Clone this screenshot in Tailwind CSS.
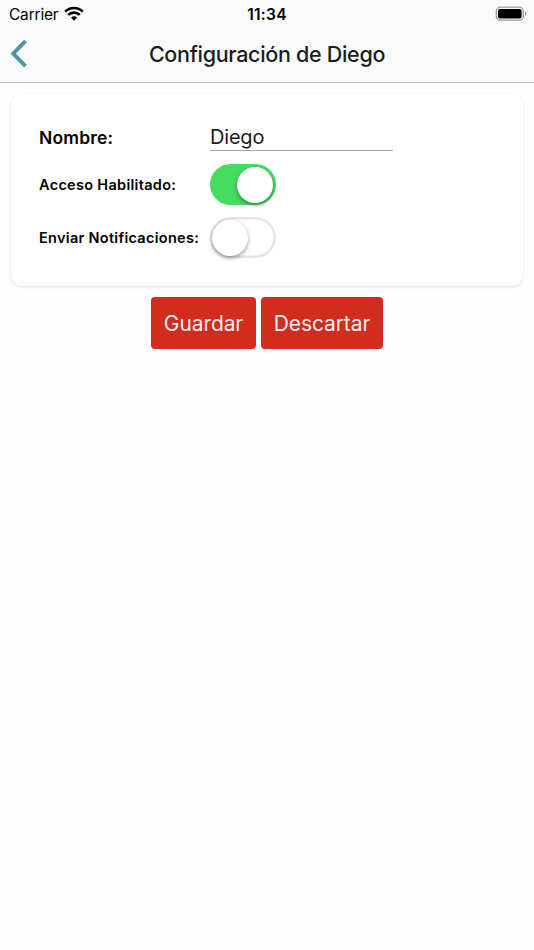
<!DOCTYPE html>
<html lang="es">
<head>
    <meta charset="UTF-8">
    <meta name="viewport" content="width=device-width, initial-scale=1.0">
    <title>Configuración de Diego</title>
    <script src="https://cdn.jsdelivr.net/npm/@tailwindcss/browser@4"></script>
</head>
<body class="bg-[#fefefe] min-h-screen overflow-hidden font-['Inter','Liberation_Sans',sans-serif] text-black">
    <header class="h-[83px] bg-[#fafafa] border-b border-[#b9b9b9]">
        <!-- Status bar -->
        <div class="grid grid-cols-3 items-center h-[27px] px-[9px] text-[15.5px] leading-[28px]">
            <div class="flex items-center gap-[6px]">
                <span class="pt-px tracking-[-0.2px]">Carrier</span>
                <svg class="w-5 h-[15px] -mt-[2px]" viewBox="0 0 20 15" fill="none" stroke="#000" stroke-width="2.7">
                    <path d="M1.2 5.6a12.6 12.6 0 0 1 17.6 0" />
                    <path d="M4.2 8.9a8.3 8.3 0 0 1 11.6 0" />
                    <path d="M7 11.6a4.3 4.3 0 0 1 6 0L10 14.7z" fill="#000" stroke="none" />
                </svg>
            </div>
            <div class="pt-px text-center font-semibold tracking-[0.3px]">11:34</div>
            <svg class="justify-self-end w-8 h-4 -mr-[2px] -mt-px" viewBox="0 0 32 16">
                <rect x="1.3" y="1.2" width="27" height="13" rx="4" fill="none" stroke="#999" stroke-width="1.3" />
                <rect x="3" y="3" width="23.6" height="9.6" rx="2" />
                <path d="M30 5.6q1.6.6 1.6 2.2T30 10z" fill="#999" />
            </svg>
        </div>
        <!-- Navigation bar -->
        <div class="grid grid-cols-[40px_1fr_40px] items-center h-[55px]">
            <a href="#" aria-label="Volver">
                <svg class="w-10 h-8 -mt-px" viewBox="0 0 40 32" fill="none" stroke="#4797a1" stroke-width="3.8">
                    <path d="M25.5 3.1L13.2 15.6L25.5 28.1" />
                </svg>
            </a>
            <h1 class="text-center text-[21.5px] font-[450] tracking-[-0.31px] text-[#1c1c1c] whitespace-nowrap">Configuración de Diego</h1>
        </div>
    </header>
    <main>
        <section class="mt-[11px] mx-[11px] h-[192px] pl-7 pt-[26px] rounded-[11px] bg-white shadow-[0_1px_3px_rgba(0,0,0,0.12)]">
            <div class="grid grid-cols-[171px_1fr] items-center">
                <label for="nombre" class="pt-[4px] text-[17.5px] leading-[22px] font-semibold tracking-[0.15px]">Nombre:</label>
                <input id="nombre" type="text" value="Diego" class="w-[183px] h-[31px] pt-[3px] border-b border-[#a3a3a3] text-[20px] tracking-[-0.2px] text-[#1c1c1c] outline-none">
            </div>
            <div class="grid grid-cols-[171px_1fr] items-center mt-[13px]">
                <span class="text-[14.5px] font-semibold tracking-[0.3px]">Acceso Habilitado:</span>
                <div class="w-[66px] h-[41px] pt-[2.5px] pl-[27px] rounded-full bg-[#46dc60]">
                    <div class="size-[36px] rounded-full bg-white shadow-[0_2px_4px_rgba(0,0,0,0.4)]"></div>
                </div>
            </div>
            <div class="grid grid-cols-[171px_1fr] items-center mt-3">
                <span class="text-[14.5px] font-semibold tracking-[0.29px] whitespace-nowrap">Enviar Notificaciones:</span>
                <div class="w-[66px] h-[41px] p-[2.5px] rounded-full bg-white shadow-[inset_0_0_0_2.5px_#e5e5e5]">
                    <div class="size-[36px] -ml-px rounded-full bg-white shadow-[0_2px_4px_rgba(0,0,0,0.4)]"></div>
                </div>
            </div>
        </section>
        <div class="flex justify-center gap-[5px] mt-[11px]">
            <button class="w-[105px] h-[52px] pt-px rounded-[4px] bg-[#d22c1f] text-[21px] tracking-[-0.1px] text-white/95">Guardar</button>
            <button class="w-[122px] h-[52px] pt-px rounded-[4px] bg-[#d22c1f] text-[21px] tracking-[-0.1px] text-white/95">Descartar</button>
        </div>
    </main>
</body>
</html>
